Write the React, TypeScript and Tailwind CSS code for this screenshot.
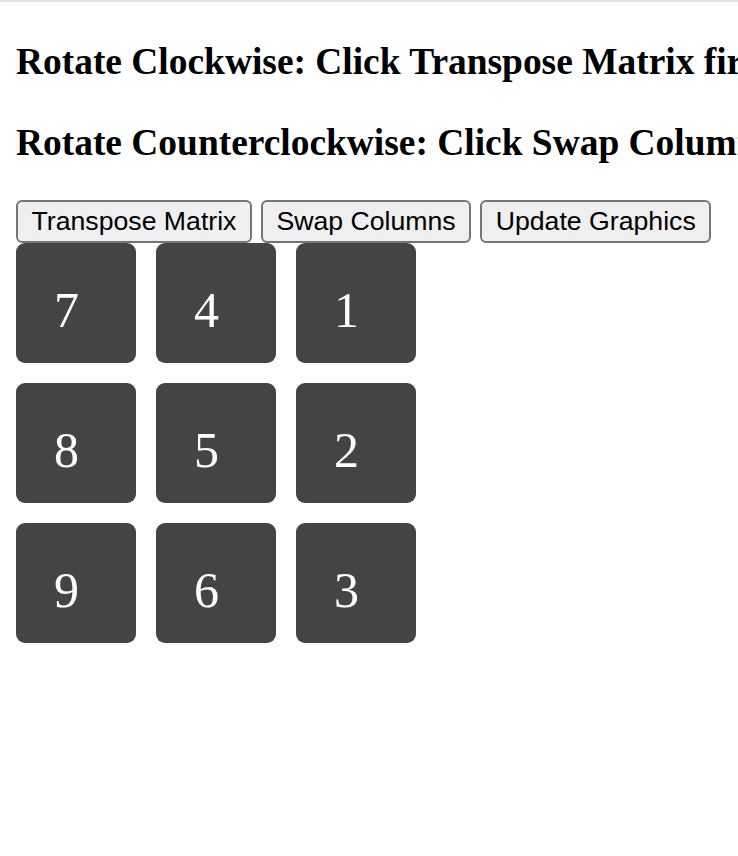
import React, { useState } from 'react';

const serif = { fontFamily: '"Liberation Serif", "Times New Roman", serif' };

const App: React.FC = () => {
  // grid shown after one clockwise rotation
  const [matrix, setMatrix] = useState<number[][]>([
    [7, 4, 1],
    [8, 5, 2],
    [9, 6, 3],
  ]);

  const transpose = () => {
    setMatrix((m) => m[0].map((_, c) => m.map((row) => row[c])));
  };

  const swapColumns = () => {
    setMatrix((m) => m.map((row) => [...row].reverse()));
  };

  return (
    <div className="min-h-[856px] w-[738px] overflow-hidden bg-white">
      <div className="h-[2px] bg-[#e4e4e4]" />
      <div className="px-[16px]">
        <h3
          className="mt-[38px] whitespace-nowrap text-[37.44px] font-bold leading-[43px] text-black"
          style={serif}
        >
          Rotate Clockwise: Click Transpose Matrix first, then Swap Columns
        </h3>
        <h3
          className="mt-[38px] whitespace-nowrap text-[37.44px] font-bold leading-[43px] text-black"
          style={serif}
        >
          Rotate Counterclockwise: Click Swap Columns first, then Transpose Matrix
        </h3>

        <div className="mt-[36px] flex gap-[9px]">
          {['Transpose Matrix', 'Swap Columns', 'Update Graphics'].map((label) => (
            <button
              key={label}
              onClick={label === 'Transpose Matrix' ? transpose : label === 'Swap Columns' ? swapColumns : undefined}
              className="h-[43px] rounded-[6px] border-2 border-[#767676] bg-[#efefef] px-[13.5px] font-['Liberation_Sans',Arial,sans-serif] text-[26.67px] leading-none text-black"
            >
              {label}
            </button>
          ))}
        </div>

        <div className="grid grid-cols-[repeat(3,120px)] gap-[20px]">
          {matrix.flat().map((n, i) => (
            <div
              key={i}
              className="h-[120px] w-[120px] rounded-[9px] bg-[#444444] pl-[38px] pt-[42px] text-[50px] leading-[50px] text-white"
              style={serif}
            >
              {n}
            </div>
          ))}
        </div>
      </div>
    </div>
  );
};

export default App;
